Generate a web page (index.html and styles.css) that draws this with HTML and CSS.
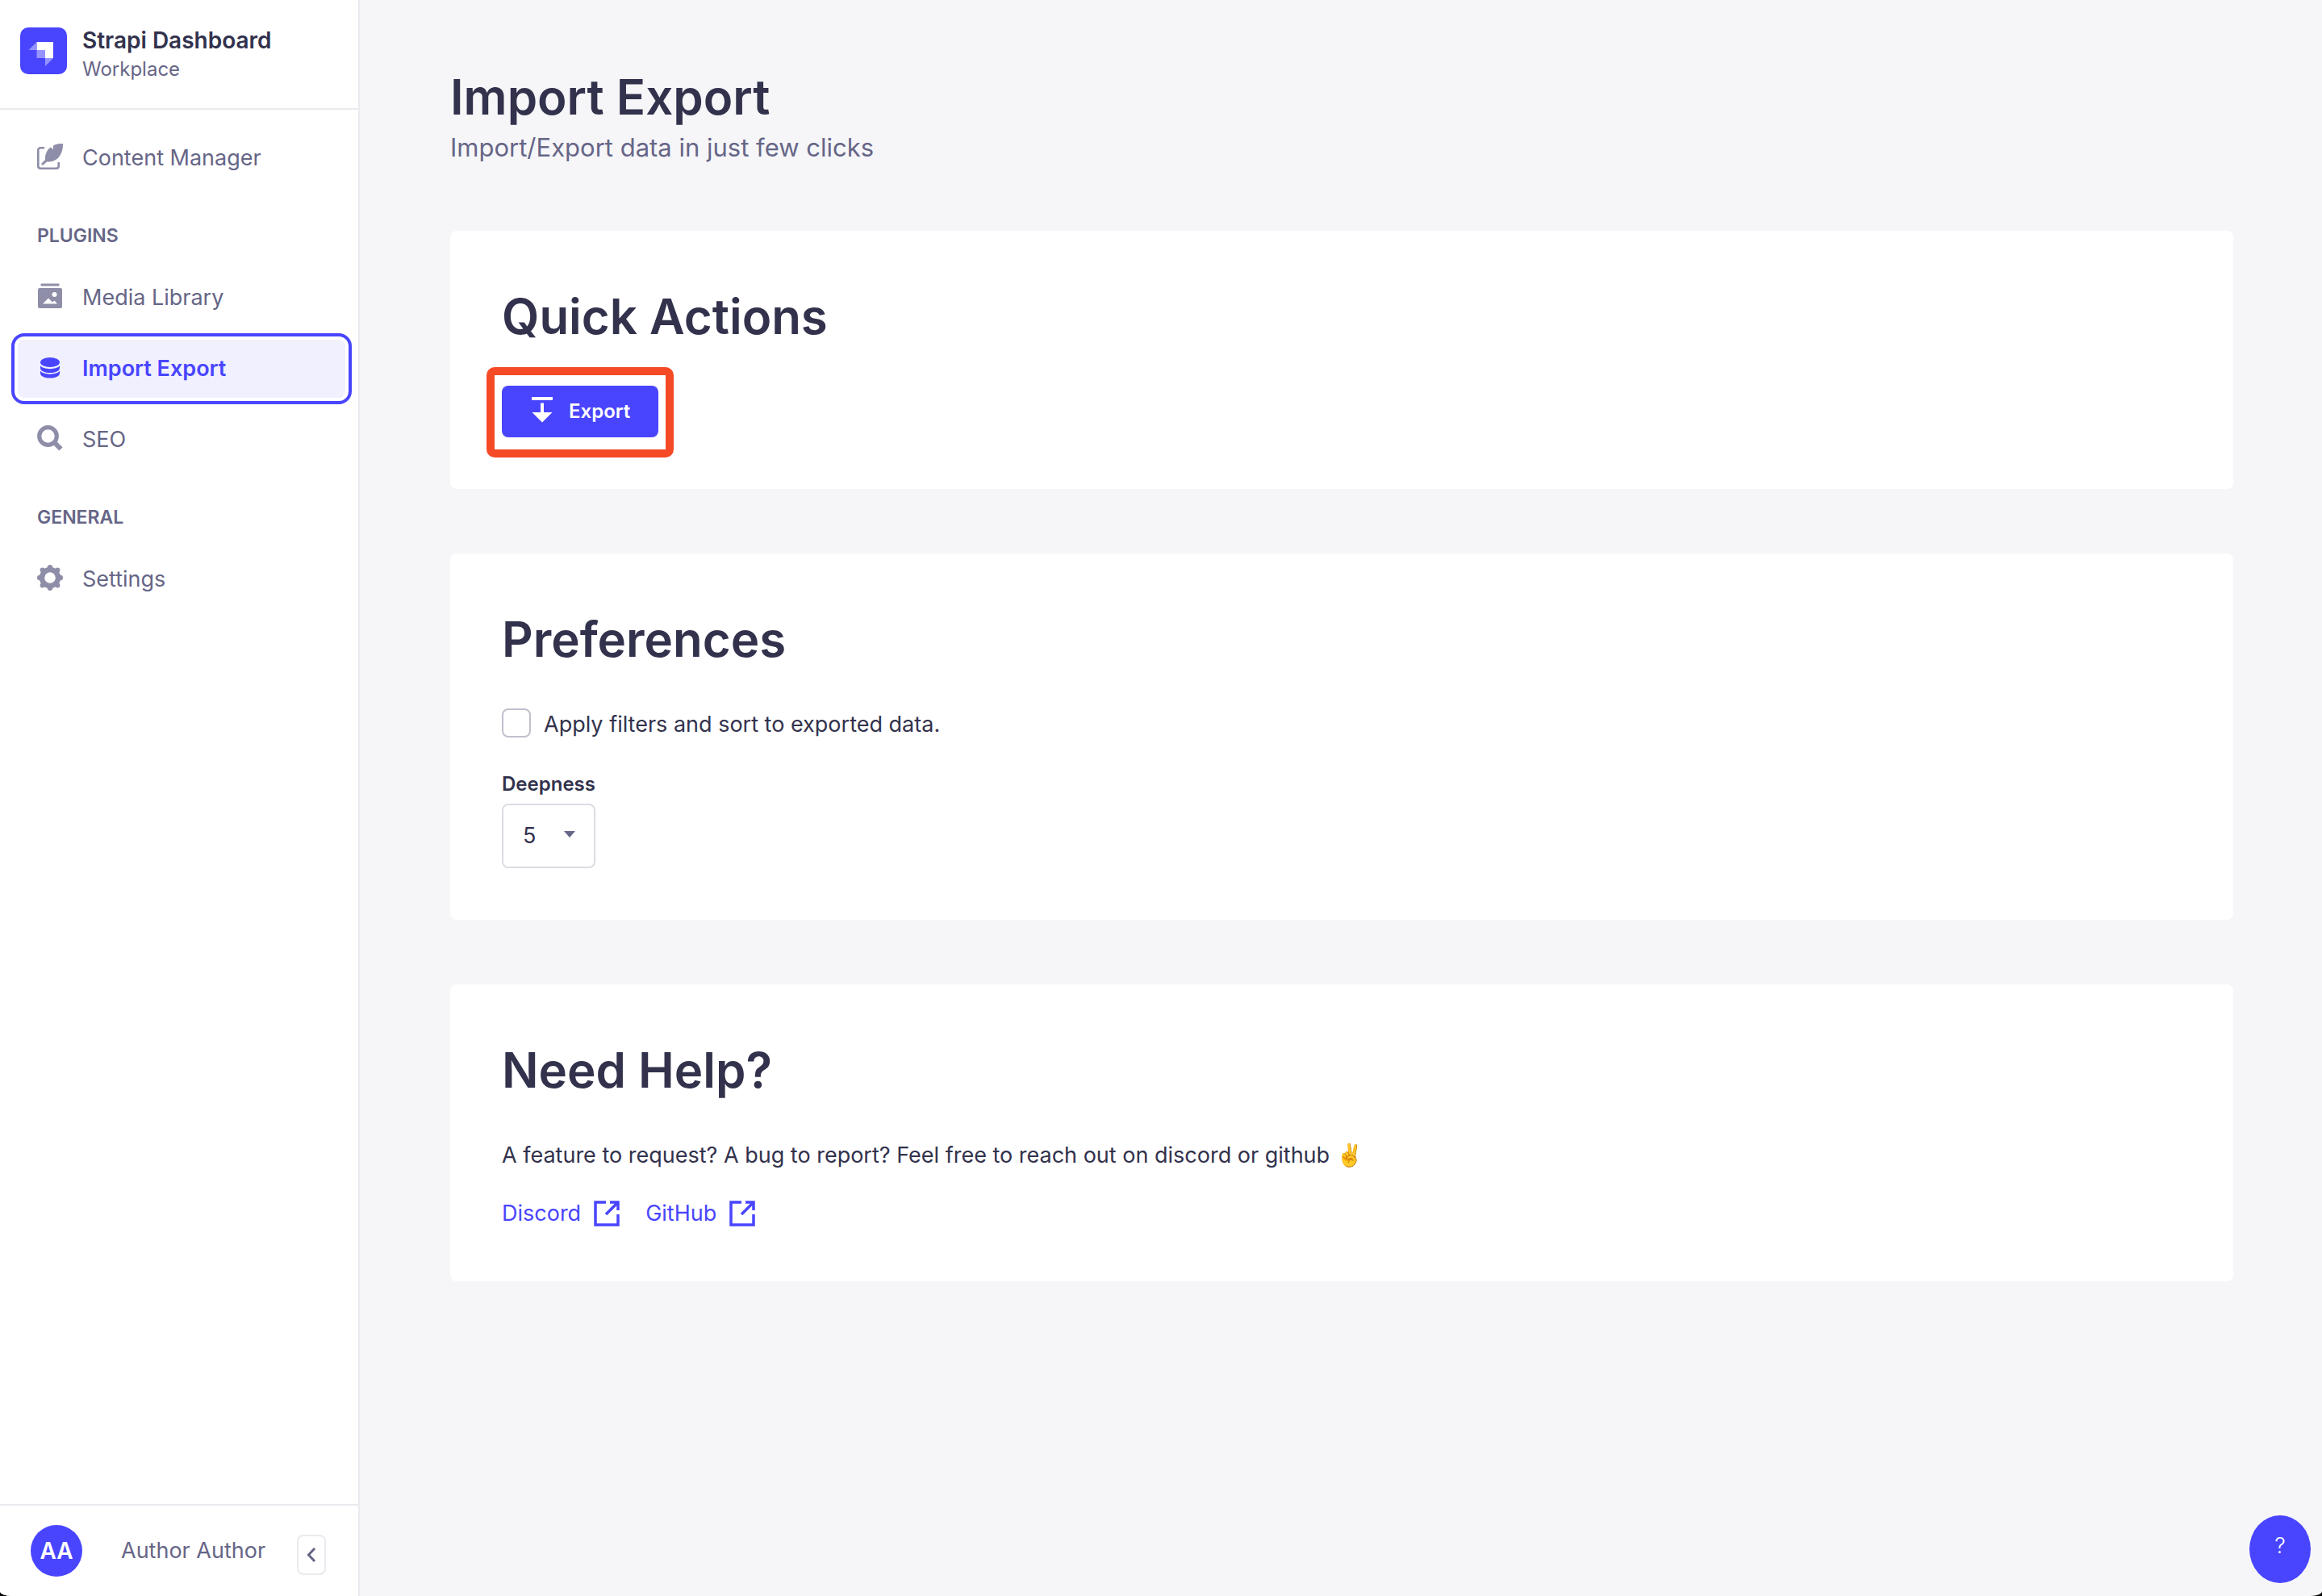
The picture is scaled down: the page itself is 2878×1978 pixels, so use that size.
FILE: index.html
```html
<!DOCTYPE html>
<html lang="en">
<head>
<meta charset="utf-8">
<title>Import Export</title>
<link rel="stylesheet" href="styles.css">
</head>
<body>
<div class="app">
  <aside class="sidebar">
    <header class="brand">
      <svg class="brand-logo" viewBox="0 0 58 58" aria-hidden="true">
        <rect width="58" height="58" rx="10" fill="#4945ff"/>
        <path d="M20.500 18H41v20H31V28H20.500z" fill="#fff"/>
        <path d="M20.500 18v10H10.500zM20.500 28H31v10H20.500zM31 38h10L31 48z" fill="#9593ff"/>
      </svg>
      <div class="brand-text">
        <span class="brand-name">Strapi Dashboard</span>
        <span class="brand-sub">Workplace</span>
      </div>
    </header>

    <nav class="nav" aria-label="Main">
      <a class="nav-link" href="#content">
        <svg class="icon" viewBox="0 0 32 32" aria-hidden="true">
          <path d="M8 5.300H4.300q-3 0-3 3v19.400q0 3 3 3H23.700q3 0 3-3V24" fill="none" stroke="currentColor" stroke-width="2.600" stroke-linecap="round"/>
          <path d="M32 0v2c0 7-4 20-17 20.500h-3L7 27 5 25l5-5c-.5-6 2-12 6.500-15.500L20 7V2.500C23 .5 27 0 32 0z" fill="currentColor"/>
        </svg>
        Content Manager
      </a>

      <h2 class="nav-title">PLUGINS</h2>
      <a class="nav-link" href="#media">
        <svg class="icon" viewBox="0 0 32 32" aria-hidden="true">
          <rect x="4.500" y="0.500" width="23" height="3" rx="1" fill="currentColor"/>
          <path fill-rule="evenodd" d="M3 6h26q2 0 2 2v21q0 2-2 2H3q-2 0-2-2V8q0-2 2-2zM7 25.500h18l-3.500-4-2.500 2-5-5zM21.500 11a3 3 0 1 0 0 6 3 3 0 0 0 0-6z" fill="currentColor"/>
        </svg>
        Media Library
      </a>
      <a class="nav-link nav-link-active" href="#import-export" aria-current="page">
        <svg class="icon" viewBox="0 0 32 32" aria-hidden="true">
          <ellipse cx="16" cy="10" rx="12" ry="6" fill="currentColor"/>
          <path d="M4 14c3 5.500 21 5.500 24 0v3c0 8-24 8-24 0zM4 20.500c3 5.500 21 5.500 24 0v3c0 8-24 8-24 0z" fill="currentColor"/>
        </svg>
        Import Export
      </a>
      <a class="nav-link" href="#seo">
        <svg class="icon" viewBox="0 0 32 32" aria-hidden="true">
          <circle cx="13.500" cy="13.500" r="10.800" fill="none" stroke="currentColor" stroke-width="5.200"/>
          <path d="M20.500 20.500l9 9" stroke="currentColor" stroke-width="6"/>
        </svg>
        SEO
      </a>

      <h2 class="nav-title">GENERAL</h2>
      <a class="nav-link" href="#settings">
        <svg class="icon" viewBox="0 0 32 32" aria-hidden="true">
          <circle cx="16" cy="16" r="10" fill="none" stroke="currentColor" stroke-width="6.400"/>
          <g fill="currentColor">
            <circle cx="16" cy="3.200" r="3.200"/><circle cx="16" cy="28.800" r="3.200"/>
            <circle cx="3.200" cy="16" r="3.200"/><circle cx="28.800" cy="16" r="3.200"/>
            <circle cx="6.600" cy="6.600" r="3"/><circle cx="25.400" cy="6.600" r="3"/>
            <circle cx="6.600" cy="25.400" r="3"/><circle cx="25.400" cy="25.400" r="3"/>
          </g>
        </svg>
        Settings
      </a>
    </nav>

    <footer class="user">
      <span class="avatar">AA</span>
      <span class="user-name">Author Author</span>
      <button class="collapse" type="button" aria-label="Collapse the sidebar">
        <svg viewBox="0 0 12 18" aria-hidden="true"><path d="M10 1L2.500 9l7.500 8" fill="none" stroke="currentColor" stroke-width="3"/></svg>
      </button>
    </footer>
  </aside>

  <main class="main">
    <header class="page-head">
      <h1 class="title">Import Export</h1>
      <p class="subtitle">Import/Export data in just few clicks</p>
    </header>

    <section class="card">
      <h2 class="title">Quick Actions</h2>
      <button class="export" type="button">
        <svg viewBox="0 0 26 32" aria-hidden="true"><path d="M0 0h26v4H0zM11 7.500h4V19h10.500L13 31.500.5 19H11z" fill="currentColor"/></svg>
        Export
      </button>
    </section>

    <section class="card">
      <h2 class="title">Preferences</h2>
      <label class="check">
        <input type="checkbox">
        Apply filters and sort to exported data.
      </label>
      <div class="field">
        <label class="field-label" for="deepness">Deepness</label>
        <div class="select">
          <select id="deepness"><option>5</option></select>
          <svg viewBox="0 0 14 8" aria-hidden="true"><path d="M0 0h14L7 8z" fill="currentColor"/></svg>
        </div>
      </div>
    </section>

    <section class="card">
      <h2 class="title">Need Help?</h2>
      <p class="text">A feature to request? A bug to report? Feel free to reach out on discord or github ✌️</p>
      <div class="links">
        <a class="link" href="#discord">Discord
          <svg viewBox="0 0 32 32" aria-hidden="true"><path d="M15 2H2v28h28V17M20 2h10v10M29 3L15 17" fill="none" stroke="currentColor" stroke-width="3.500"/></svg>
        </a>
        <a class="link" href="#github">GitHub
          <svg viewBox="0 0 32 32" aria-hidden="true"><path d="M15 2H2v28h28V17M20 2h10v10M29 3L15 17" fill="none" stroke="currentColor" stroke-width="3.500"/></svg>
        </a>
      </div>
    </section>
  </main>
  <button class="help" type="button" aria-label="Help">?</button>
</div>
</body>
</html>
```
FILE: styles.css
```css
* { box-sizing: border-box; }

html { background: #000; }

body {
  margin: 0;
  font-family: Inter, "Liberation Sans", sans-serif;
  font-size: 27px;
  line-height: 40px;
  color: #32324d;
}

h1, h2, p { margin: 0; }
a { color: inherit; text-decoration: none; }
button, select { font: inherit; color: inherit; margin: 0; cursor: pointer; }

.app {
  display: flex;
  min-height: 100vh;
  background: #f6f6f9;
  border-radius: 0 0 14px 14px / 0 0 6px 6px;
  overflow: hidden;
}

/* Sidebar */
.sidebar {
  display: flex;
  flex-direction: column;
  flex: 0 0 446px;
  background: #fff;
  border-right: 2px solid #eaeaef;
}

.brand {
  display: flex;
  gap: 19px;
  padding: 34px 25px 28px;
  border-bottom: 2px solid #eaeaef;
}

.brand-logo { width: 58px; height: 58px; }
.brand-text { display: flex; flex-direction: column; }
.brand-name { font-size: 28px; font-weight: 600; line-height: 32px; }
.brand-sub { font-size: 24px; line-height: 40px; color: #666687; }

.nav {
  display: flex;
  flex-direction: column;
  flex: 1;
  padding: 24px 16px 24px 22px;
}

.nav-link {
  display: flex;
  align-items: center;
  gap: 24px;
  height: 72px;
  padding: 0 24px;
  border-radius: 8px;
  color: #666687;
}

.nav-link + .nav-link { margin-top: 16px; }
.icon { width: 32px; height: 32px; margin-bottom: 4px; color: #8e8ea9; }

.nav-link-active {
  background: #f0f0ff;
  color: #4945ff;
  font-weight: 600;
  outline: 4px solid #4945ff;
  outline-offset: 4px;
}
.nav-link-active .icon { color: inherit; }

.nav-title {
  padding: 44px 24px 25px;
  font-size: 23px;
  font-weight: 600;
  line-height: 32px;
  color: #666687;
}

.user {
  display: flex;
  align-items: center;
  padding: 24px 40px 24px 38px;
  border-top: 2px solid #eaeaef;
  color: #666687;
}

.avatar {
  display: grid;
  place-items: center;
  width: 64px;
  height: 64px;
  border-radius: 50%;
  background: #4945ff;
  color: #fff;
  font-size: 28px;
  font-weight: 600;
}

.user-name { margin-left: 48px; }

.collapse {
  display: grid;
  place-items: center;
  width: 36px;
  height: 50px;
  margin: 10px 0 0 auto;
  padding: 0;
  background: #fff;
  border: 2px solid #eaeaef;
  border-radius: 8px;
}
.collapse svg { width: 12px; height: 18px; }

/* Page */
.main {
  flex: 1;
  display: flex;
  flex-direction: column;
  gap: 80px;
  padding: 80px 110px 112px 112px;
}

.title {
  font-size: 60px;
  font-weight: 600;
  line-height: 80px;
}

.subtitle { font-size: 31px; line-height: 46px; color: #666687; }

.card {
  display: flex;
  flex-direction: column;
  align-items: flex-start;
  padding: 66px 64px 64px;
  background: #fff;
  border-radius: 8px;
}

.export {
  position: relative;
  display: flex;
  align-items: center;
  gap: 20px;
  height: 64px;
  margin-top: 46px;
  padding: 0 35px 0 37px;
  border: 0;
  border-radius: 8px;
  background: #4945ff;
  color: #fff;
  font-size: 24px;
  font-weight: 600;
}
.export svg { width: 26px; height: 32px; margin-bottom: 4px; }

/* Highlight frame around the export button */
.export::after {
  content: "";
  position: absolute;
  inset: -23px -19px -25px;
  border: 10px solid #f54a26;
  border-radius: 10px;
  pointer-events: none;
}

.check {
  display: flex;
  align-items: center;
  gap: 16px;
  margin-top: 44px;
  line-height: 44px;
}

.check input {
  appearance: none;
  width: 36px;
  height: 36px;
  margin: 0 0 4px;
  border: 2px solid #c0c0cf;
  border-radius: 8px;
  background: #fff;
}

.field { margin-top: 34px; }
.field-label { display: block; font-size: 24px; font-weight: 600; line-height: 36px; }

.select {
  display: grid;
  align-items: center;
  width: 116px;
  margin-top: 6px;
}
.select > * { grid-area: 1 / 1; }
.select select {
  appearance: none;
  width: 100%;
  height: 80px;
  padding: 0 24px;
  border: 2px solid #dcdce4;
  border-radius: 8px;
  background: #fff;
}
.select svg {
  justify-self: end;
  width: 14px;
  height: 8px;
  margin: 0 25px 4px 0;
  color: #666687;
  pointer-events: none;
}

.text { margin-top: 46px; }
.links { display: flex; gap: 32px; margin-top: 32px; }
.link { display: flex; align-items: center; gap: 16px; color: #4945ff; }
.link svg { width: 32px; height: 32px; }

.help {
  position: fixed;
  right: 14px;
  bottom: 16px;
  width: 76px;
  height: 84px;
  padding: 0 0 8px;
  border: 0;
  border-radius: 50%;
  background: #4945ff;
  color: #fff;
  font-weight: 300;
}
```
